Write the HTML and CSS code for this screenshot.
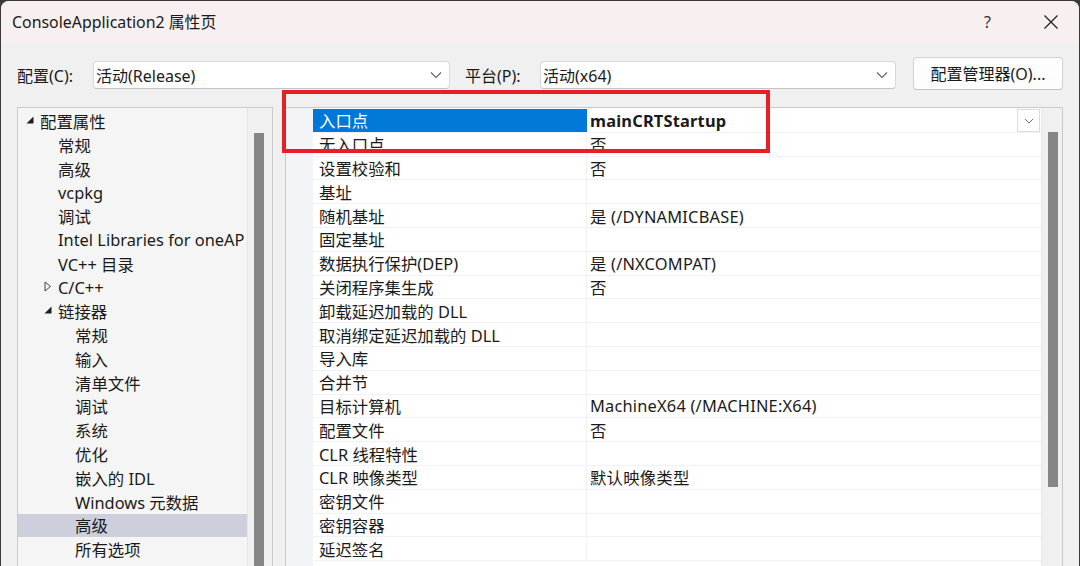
FILE: index.html
```html
<!DOCTYPE html>
<html lang="zh-CN">
<head>
<meta charset="utf-8">
<title>ConsoleApplication2 属性页</title>
<link rel="stylesheet" href="styles.css">
</head>
<body>
<div class="window">
  <div class="titlebar">
    <div class="title">ConsoleApplication2 属性页</div>
    <div class="title-actions">
      <span class="help">?</span>
      <svg class="close" width="16" height="16" viewBox="0 0 16 16"><path d="M1.5 1.5 L14.5 14.5 M14.5 1.5 L1.5 14.5" stroke="#222" stroke-width="1.3" fill="none"/></svg>
    </div>
  </div>

  <div class="configrow">
    <div class="label lab1">配置(C):</div>
    <div class="combo combo1"><span>活动(Release)</span><svg class="chev" width="12" height="8" viewBox="0 0 12 8"><path d="M1 1.5 L6 6.5 L11 1.5" stroke="#606060" stroke-width="1.1" fill="none"/></svg></div>
    <div class="label lab2">平台(P):</div>
    <div class="combo combo2"><span>活动(x64)</span><svg class="chev" width="12" height="8" viewBox="0 0 12 8"><path d="M1 1.5 L6 6.5 L11 1.5" stroke="#606060" stroke-width="1.1" fill="none"/></svg></div>
    <div class="button">配置管理器(O)...</div>
  </div>

  <div class="main">
    <div class="tree">
      <div class="tree-items">
        <div class="trow l0"><span class="arrow"><svg width="8" height="8" viewBox="0 0 8 8"><polygon points="7.5,0.5 7.5,7.5 0.5,7.5" fill="#1e1e1e"/></svg></span>配置属性</div>
        <div class="trow l1"><span class="arrow"></span>常规</div>
        <div class="trow l1"><span class="arrow"></span>高级</div>
        <div class="trow l1"><span class="arrow"></span>vcpkg</div>
        <div class="trow l1"><span class="arrow"></span>调试</div>
        <div class="trow l1"><span class="arrow"></span>Intel Libraries for oneAP</div>
        <div class="trow l1"><span class="arrow"></span>VC++ 目录</div>
        <div class="trow l1"><span class="arrow"><svg width="8" height="11" viewBox="0 0 8 11"><polygon points="1,1 6.5,5.5 1,10" fill="none" stroke="#444" stroke-width="1"/></svg></span>C/C++</div>
        <div class="trow l1"><span class="arrow"><svg width="8" height="8" viewBox="0 0 8 8"><polygon points="7.5,0.5 7.5,7.5 0.5,7.5" fill="#1e1e1e"/></svg></span>链接器</div>
        <div class="trow l2"><span class="arrow"></span>常规</div>
        <div class="trow l2"><span class="arrow"></span>输入</div>
        <div class="trow l2"><span class="arrow"></span>清单文件</div>
        <div class="trow l2"><span class="arrow"></span>调试</div>
        <div class="trow l2"><span class="arrow"></span>系统</div>
        <div class="trow l2"><span class="arrow"></span>优化</div>
        <div class="trow l2"><span class="arrow"></span>嵌入的 IDL</div>
        <div class="trow l2"><span class="arrow"></span>Windows 元数据</div>
        <div class="trow l2 selected"><span class="arrow"></span>高级</div>
        <div class="trow l2"><span class="arrow"></span>所有选项</div>
      </div>
      <div class="tree-scroll"><div class="thumb tthumb"></div></div>
    </div>

    <div class="grid">
      <div class="gutter"></div>
      <div class="rows">
        <div class="prow active"><div class="pname">入口点</div><div class="pval bold">mainCRTStartup</div><div class="dropbtn"><svg width="10" height="6" viewBox="0 0 10 6"><path d="M1 1 L5 5 L9 1" stroke="#707070" stroke-width="1" fill="none"/></svg></div></div>
        <div class="prow"><div class="pname">无入口点</div><div class="pval">否</div></div>
        <div class="prow"><div class="pname">设置校验和</div><div class="pval">否</div></div>
        <div class="prow"><div class="pname">基址</div><div class="pval"></div></div>
        <div class="prow"><div class="pname">随机基址</div><div class="pval">是 (/DYNAMICBASE)</div></div>
        <div class="prow"><div class="pname">固定基址</div><div class="pval"></div></div>
        <div class="prow"><div class="pname">数据执行保护(DEP)</div><div class="pval">是 (/NXCOMPAT)</div></div>
        <div class="prow"><div class="pname">关闭程序集生成</div><div class="pval">否</div></div>
        <div class="prow"><div class="pname">卸载延迟加载的 DLL</div><div class="pval"></div></div>
        <div class="prow"><div class="pname">取消绑定延迟加载的 DLL</div><div class="pval"></div></div>
        <div class="prow"><div class="pname">导入库</div><div class="pval"></div></div>
        <div class="prow"><div class="pname">合并节</div><div class="pval"></div></div>
        <div class="prow"><div class="pname">目标计算机</div><div class="pval">MachineX64 (/MACHINE:X64)</div></div>
        <div class="prow"><div class="pname">配置文件</div><div class="pval">否</div></div>
        <div class="prow"><div class="pname">CLR 线程特性</div><div class="pval"></div></div>
        <div class="prow"><div class="pname">CLR 映像类型</div><div class="pval">默认映像类型</div></div>
        <div class="prow"><div class="pname">密钥文件</div><div class="pval"></div></div>
        <div class="prow"><div class="pname">密钥容器</div><div class="pval"></div></div>
        <div class="prow"><div class="pname">延迟签名</div><div class="pval"></div></div>
      </div>
      <div class="grid-scroll"><div class="thumb gthumb"></div></div>
    </div>
  </div>

  <div class="highlight-box"></div>
</div>
</body>
</html>
```

FILE: styles.css
```css
* { box-sizing: border-box; }
html, body { margin: 0; padding: 0; }
body {
  width: 1080px;
  height: 566px;
  overflow: hidden;
  background: #3a3a3a;
  font-family: "Noto Sans", "Noto Sans CJK SC", sans-serif;
  color: #1a1a1a;
}
.window {
  position: relative;
  margin: 1px 0 0 1px;
  width: 1078px;
  height: 565px;
  background: #f0f0f0;
  border-radius: 8px 8px 0 0;
  overflow: hidden;
}
.titlebar {
  height: 41px;
  background: #f7eff0;
  display: flex;
  align-items: center;
  justify-content: space-between;
  padding: 0 20px 0 11px;
}
.title {
  font-size: 15.9px;
  margin-top: -1px;
}
.title-actions {
  display: flex;
  align-items: center;
  gap: 52px;
}
.help {
  font-family: "Noto Sans", sans-serif;
  font-size: 16px;
  color: #333;
}
.close { display: block; }

.configrow {
  height: 65px;
  display: flex;
  align-items: center;
  padding-left: 16px;
  font-size: 16px;
}
.label { white-space: nowrap; }
.lab1 { width: 76px; }
.lab2 { width: 75px; margin-left: 15px; }
.combo {
  height: 28px;
  background: #ffffff;
  border: 1px solid #d8d8d8;
  border-bottom-color: #c4c4c4;
  border-radius: 4px;
  display: flex;
  align-items: center;
  justify-content: space-between;
  padding: 0 7px 0 2px;
}
.combo1 { width: 357px; }
.combo2 { width: 356px; }
.chev { display: block; }
.button {
  margin-left: 17px;
  width: 150px;
  height: 33px;
  background: #fdfdfd;
  border: 1px solid #d2d2d2;
  border-bottom-color: #c2c2c2;
  border-radius: 4px;
  display: flex;
  align-items: center;
  justify-content: center;
  margin-top: -3px;
}

.main {
  display: flex;
  gap: 12px;
  padding-left: 16px;
  font-size: 16.4px;
}
.tree {
  width: 256px;
  height: 470px;
  border: 1px solid #cacaca;
  background: #f5f5f5;
  display: flex;
}
.tree-items {
  width: 229px;
  padding-top: 1px;
}
.trow {
  height: 23.8px;
  display: flex;
  align-items: center;
  white-space: nowrap;
  overflow: hidden;
}
.trow.l0 { padding-left: 8px; }
.trow.l1 { padding-left: 26px; }
.trow.l2 { padding-left: 43px; }
.trow.selected { background: #cdd0dc; }
.arrow {
  width: 14px;
  flex: none;
  display: flex;
  align-items: center;
}
.arrow svg { display: block; margin-top: -2px; }
.tree-scroll {
  flex: 1;
  background: #f0f0f0;
  border-left: 1px solid #e4e4e4;
  padding: 25px 0 0 6px;
}
.thumb { background: #868686; width: 10px; }
.tthumb { height: 500px; }

.grid {
  width: 778px;
  height: 470px;
  border: 1px solid #cacaca;
  background: #ffffff;
  display: flex;
}
.gutter {
  width: 27px;
  background: #f3f4f8;
  border-top: 1px solid #f0f0f0;
}
.rows {
  width: 728px;
  padding-top: 1px;
}
.prow {
  position: relative;
  height: 23.8px;
  display: flex;
  border-bottom: 1px solid #f0f2f7;
}
.pname {
  width: 274px;
  padding-left: 6px;
  border-right: 1px solid #f0f2f7;
  display: flex;
  align-items: center;
  white-space: nowrap;
}
.pval {
  flex: 1;
  padding-left: 3px;
  display: flex;
  align-items: center;
  white-space: nowrap;
  letter-spacing: 0.2px;
}
.pval.bold { font-weight: bold; letter-spacing: 0.2px; }
.prow.active .pname { background: #0078d7; color: #ffffff; border-right-color: #0078d7; }
.dropbtn {
  position: absolute;
  right: 1px;
  top: 0;
  width: 23px;
  height: 23px;
  border: 1px solid #dcdcdc;
  background: #ffffff;
  display: flex;
  align-items: center;
  justify-content: center;
}
.dropbtn svg { display: block; }
.grid-scroll {
  flex: 1;
  background: #f0f0f0;
  border-left: 1px solid #e8e8e8;
  padding: 24px 0 0 6px;
}
.gthumb { height: 355px; }

.highlight-box {
  position: absolute;
  left: 281px;
  top: 89px;
  width: 488px;
  height: 63px;
  border: 4px solid #e81d25;
}
```
